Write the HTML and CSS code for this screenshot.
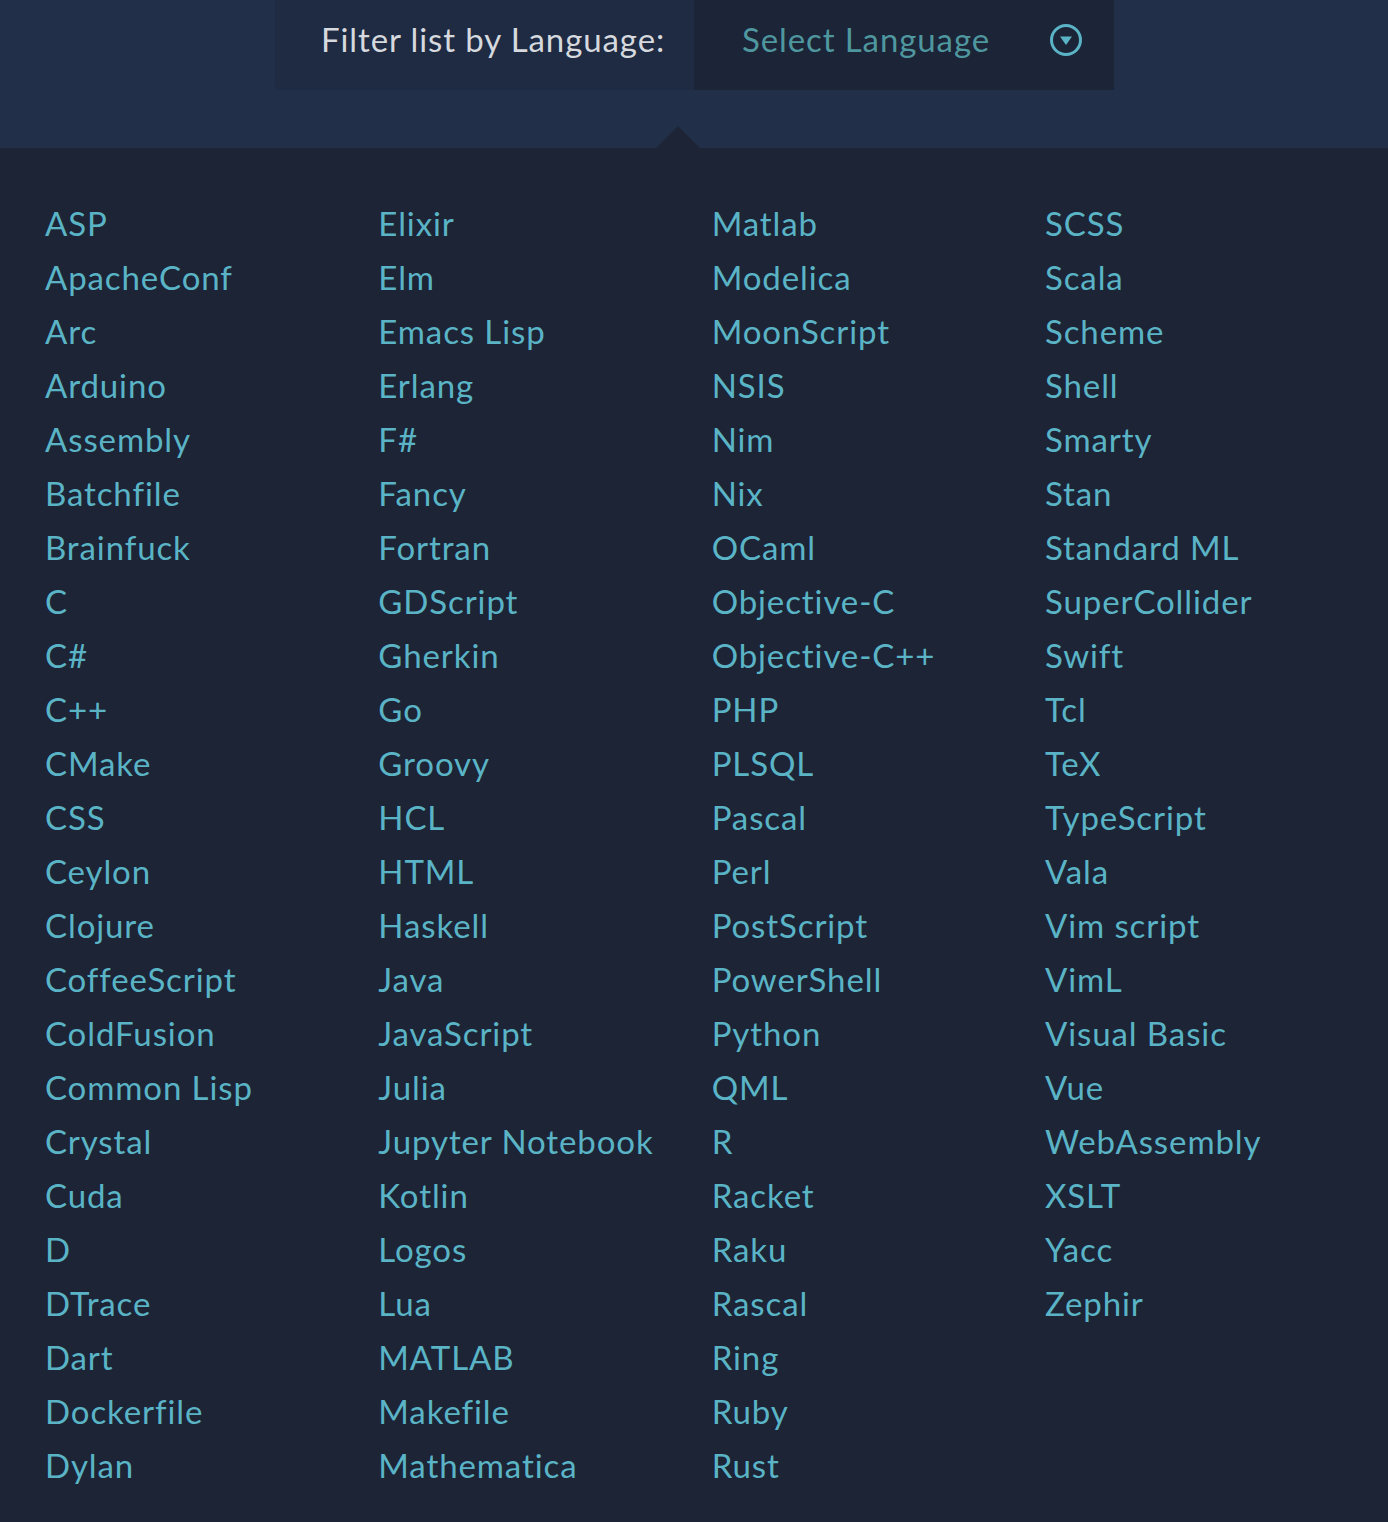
FILE: index.html
```html
<!DOCTYPE html>
<html lang="en">
<head>
<meta charset="utf-8">
<title>Filter list by Language</title>
<link rel="stylesheet" href="styles.css">
</head>
<body>
<header class="top">
  <div class="filter">
    <div class="filter-label">Filter list by Language:</div>
    <div class="filter-select">
      <span class="placeholder">Select Language</span>
      <svg class="caret" width="34" height="34" viewBox="0 0 34 34" aria-hidden="true">
        <circle cx="17" cy="17" r="14.5" fill="none" stroke="#5ab4c6" stroke-width="3"/>
        <path d="M11 13.5 L23 13.5 L17 22 Z" fill="#5ab4c6"/>
      </svg>
    </div>
  </div>
  <span class="pointer"></span>
</header>
<main class="langs">
  <ul class="col">
    <li>ASP</li><li>ApacheConf</li><li>Arc</li><li>Arduino</li><li>Assembly</li><li>Batchfile</li><li>Brainfuck</li><li>C</li><li>C#</li><li>C++</li><li>CMake</li><li>CSS</li><li>Ceylon</li><li>Clojure</li><li>CoffeeScript</li><li>ColdFusion</li><li>Common Lisp</li><li>Crystal</li><li>Cuda</li><li>D</li><li>DTrace</li><li>Dart</li><li>Dockerfile</li><li>Dylan</li>
  </ul>
  <ul class="col">
    <li>Elixir</li><li>Elm</li><li>Emacs Lisp</li><li>Erlang</li><li>F#</li><li>Fancy</li><li>Fortran</li><li>GDScript</li><li>Gherkin</li><li>Go</li><li>Groovy</li><li>HCL</li><li>HTML</li><li>Haskell</li><li>Java</li><li>JavaScript</li><li>Julia</li><li>Jupyter Notebook</li><li>Kotlin</li><li>Logos</li><li>Lua</li><li>MATLAB</li><li>Makefile</li><li>Mathematica</li>
  </ul>
  <ul class="col">
    <li>Matlab</li><li>Modelica</li><li>MoonScript</li><li>NSIS</li><li>Nim</li><li>Nix</li><li>OCaml</li><li>Objective-C</li><li>Objective-C++</li><li>PHP</li><li>PLSQL</li><li>Pascal</li><li>Perl</li><li>PostScript</li><li>PowerShell</li><li>Python</li><li>QML</li><li>R</li><li>Racket</li><li>Raku</li><li>Rascal</li><li>Ring</li><li>Ruby</li><li>Rust</li>
  </ul>
  <ul class="col">
    <li>SCSS</li><li>Scala</li><li>Scheme</li><li>Shell</li><li>Smarty</li><li>Stan</li><li>Standard ML</li><li>SuperCollider</li><li>Swift</li><li>Tcl</li><li>TeX</li><li>TypeScript</li><li>Vala</li><li>Vim script</li><li>VimL</li><li>Visual Basic</li><li>Vue</li><li>WebAssembly</li><li>XSLT</li><li>Yacc</li><li>Zephir</li>
  </ul>
</main>
</body>
</html>
```

FILE: styles.css
```css
html, body {
  margin: 0;
  padding: 0;
}
body {
  background: #1c2436;
  font-family: Lato, "Noto Sans", sans-serif;
  -webkit-font-smoothing: antialiased;
}
.top {
  position: relative;
  height: 148px;
  background: #222f48;
}
.filter {
  margin-left: 275px;
  width: 839px;
  height: 90px;
  display: flex;
}
.filter-label {
  width: 419px;
  box-sizing: border-box;
  padding-left: 46px;
  padding-top: 18px;
  background: #1f2b43;
  border-bottom-left-radius: 5px;
  color: #d6d9de;
  font-size: 33px;
  letter-spacing: 0.9px;
  line-height: 42px;
  white-space: nowrap;
}
.filter-select {
  flex: 1;
  box-sizing: border-box;
  padding-left: 48px;
  padding-right: 31px;
  padding-top: 18px;
  background: #1c2437;
  display: flex;
  align-items: flex-start;
  justify-content: space-between;
}
.placeholder {
  color: #4f979f;
  font-size: 33px;
  letter-spacing: 0.9px;
  line-height: 42px;
  white-space: nowrap;
}
.caret {
  margin-top: 5px;
}
.pointer {
  position: absolute;
  left: 656px;
  bottom: 0;
  width: 0;
  height: 0;
  border-left: 22px solid transparent;
  border-right: 22px solid transparent;
  border-bottom: 22px solid #1c2436;
}
.langs {
  display: grid;
  grid-template-columns: repeat(4, 333.33px);
  padding: 48px 0 30px 45px;
}
.col {
  list-style: none;
  margin: 0;
  padding: 0;
}
.col li {
  color: #5ab4c6;
  font-size: 33px;
  letter-spacing: 0.9px;
  line-height: 54px;
  height: 54px;
  white-space: nowrap;
}
```
